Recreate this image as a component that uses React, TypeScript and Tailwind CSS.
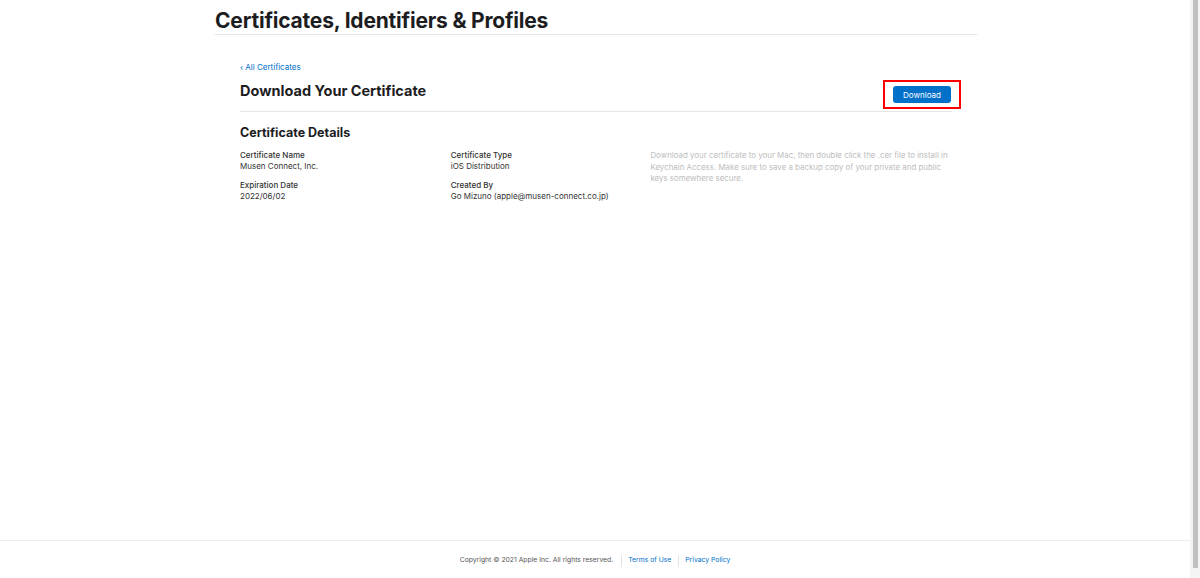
import React from 'react';

const font = { fontFamily: 'Inter, "Liberation Sans", sans-serif' };

const Field = ({ label, value }: { label: string; value: string }) => (
    <div className="flex flex-col">
        <span className="text-[8px] leading-[11px] font-medium text-[#333]">{label}</span>
        <span className="text-[8px] leading-[11px] text-[#333]">{value}</span>
    </div>
);

export default function App() {
    return (
        <div className="flex h-[578px] w-[1200px] bg-white text-[#1d1d1f]" style={font}>
            <div className="flex flex-1 flex-col">
                <main className="flex-1">
                    <div className="ml-[215px] w-[762px]">
                        <header className="border-b border-[#e5e5e5] pt-[9px] pb-[2px]">
                            <h1 className="text-[21px] font-bold leading-[23px] tracking-[-0.2px] text-[#1d1d1f]">
                                Certificates, Identifiers &amp; Profiles
                            </h1>
                        </header>

                        <section className="px-[25px] pt-[27px]">
                            <a href="#" className="block text-[8px] leading-[10px] text-[#0070c9]">
                                ‹ All Certificates
                            </a>

                            <div className="mt-[8px] flex items-end justify-between border-b border-[#e5e5e5] pb-[2px]">
                                <h2 className="mb-[9px] text-[14.5px] font-bold leading-[18px]">Download Your Certificate</h2>
                                <div className="-mr-[9px] border-2 border-[#ff0000] px-[8px] py-[4px]">
                                    <button className="block h-[17px] w-[58px] rounded-[3px] bg-[#0070c9] text-[8px] text-white">
                                        Download
                                    </button>
                                </div>
                            </div>

                            <h3 className="mt-[13px] text-[12.5px] font-bold leading-[16px]">Certificate Details</h3>

                            <div className="mt-[9px] flex">
                                <div className="flex w-[211px] flex-col gap-[8px]">
                                    <Field label="Certificate Name" value="Musen Connect, Inc." />
                                    <Field label="Expiration Date" value="2022/06/02" />
                                </div>
                                <div className="flex w-[200px] flex-col gap-[8px]">
                                    <Field label="Certificate Type" value="iOS Distribution" />
                                    <Field label="Created By" value="Go Mizuno (apple@musen-connect.co.jp)" />
                                </div>
                                <p className="w-[302px] text-[7.9px] leading-[11.5px] text-[#bdbdbd]">
                                    Download your certificate to your Mac, then double click the .cer file to install in
                                    Keychain Access. Make sure to save a backup copy of your private and public keys
                                    somewhere secure.
                                </p>
                            </div>
                        </section>
                    </div>
                </main>

                <footer className="flex h-[38px] items-center justify-center border-t border-[#ececec] pt-[2px]">
                    <span className="text-[6.8px] text-[#555]">Copyright © 2021 Apple Inc. All rights reserved.</span>
                    <span className="ml-[8px] mr-[6px] h-[12px] w-px bg-[#e5e5e5]" />
                    <a href="#" className="text-[6.8px] text-[#0070c9]">Terms of Use</a>
                    <span className="ml-[7px] mr-[6px] h-[12px] w-px bg-[#e5e5e5]" />
                    <a href="#" className="text-[6.8px] text-[#0070c9]">Privacy Policy</a>
                </footer>
            </div>

            <div className="flex w-[10px] justify-center bg-[#f4f4f4] pb-[10px]">
                <div className="w-[5px] bg-[#c1c1c1]" />
            </div>
        </div>
    );
}
